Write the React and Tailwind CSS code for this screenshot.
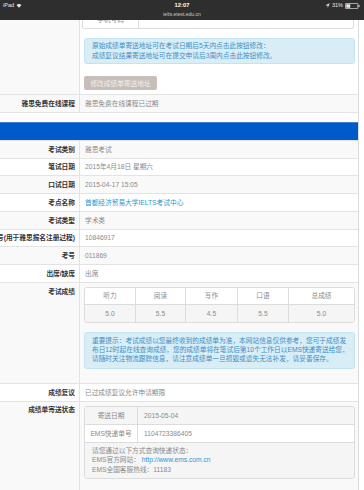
import React from 'react';

// IELTS score page as seen on iPad Safari (scaled)

const rows = [
  { label: '考试类别', value: '雅思考试' },
  { label: '笔试日期', value: '2015年4月18日 星期六' },
  { label: '口试日期', value: '2015-04-17 15:05' },
  { label: '考点名称', value: '首都经济贸易大学IELTS考试中心', link: true },
  { label: '考试类型', value: '学术类' },
  { label: '用户号(用于雅思报名注册过程)', value: '10846917' },
  { label: '考号', value: '011869' },
  { label: '出席/缺席', value: '出席' },
];

const scores = [
  { name: '听力', value: '5.0', w: 'w-[51px]' },
  { name: '阅读', value: '5.5', w: 'w-[50px]' },
  { name: '写作', value: '4.5', w: 'w-[52px]' },
  { name: '口语', value: '5.5', w: 'w-[51px]' },
  { name: '总成绩', value: '5.0', w: 'flex-1' },
];

const StatusBar = () => (
  <div className="h-[20px] bg-[#2e2e2e] text-white relative font-['Liberation_Sans',sans-serif]">
    <div className="absolute left-[3px] top-[2px] flex items-center gap-[2px] text-[5.5px] leading-[7px] text-[#e8e8e8]">
      <span>iPad</span>
      <svg width="6" height="5" viewBox="0 0 12 10">
        <path d="M6 9.5 L1 4 A7.5 7.5 0 0 1 11 4 Z" fill="#e8e8e8" />
      </svg>
    </div>
    <div className="absolute left-0 right-0 top-[2px] text-center text-[5.8px] leading-[7px] font-bold">12:07</div>
    <div className="absolute left-0 right-0 top-[11px] text-center text-[5px] leading-[7px] text-[#cfcfcf]">
      ielts.etest.edu.cn
    </div>
    <div className="absolute right-[4px] top-[2px] flex items-center gap-[2px] text-[5.5px] leading-[7px] text-[#e8e8e8]">
      <svg width="5" height="5" viewBox="0 0 10 10">
        <path d="M9.5 0.5 L0.5 4.5 L5 5 L5.5 9.5 Z" fill="#e8e8e8" />
      </svg>
      <span>31%</span>
      <svg width="15" height="6" viewBox="0 0 30 12">
        <rect x="0.75" y="0.75" width="25" height="10.5" rx="1.5" fill="none" stroke="#e8e8e8" strokeWidth="1.5" />
        <rect x="2.5" y="2.5" width="8" height="7" fill="#e8e8e8" />
        <rect x="27" y="4" width="2" height="4" fill="#e8e8e8" />
      </svg>
    </div>
  </div>
);

const Row = ({ label, striped, children, tall }) => (
  <div
    className={`flex border-t border-[#e3e3e3] ${striped ? 'bg-[#f9f9f9]' : 'bg-white'} ${tall ? 'items-start' : 'h-[17.75px]'}`}
  >
    <div className="w-[80px] shrink-0 self-stretch border-r border-[#e3e3e3] overflow-hidden">
      <div className="h-[16.75px] flex items-center justify-end pr-[4px]">
        <span className="shrink-0 whitespace-nowrap font-bold text-[#333]">{label}</span>
      </div>
    </div>
    <div className="flex-1 min-w-0">{children}</div>
  </div>
);

const Value = ({ children, link }) => (
  <div className={`h-[16.75px] flex items-center pl-[5px] whitespace-nowrap ${link ? 'text-[#2a97d0]' : 'text-[#8a8a8a]'}`}>
    {children}
  </div>
);

const App = () => {
  return (
    <div className="w-[364px] h-[490px] overflow-hidden bg-white text-[6.7px] leading-[9px] font-['Liberation_Sans','Noto_Sans_CJK_SC',sans-serif]">
      <StatusBar />

      <div className="w-[359px] border-r border-[#dcdcdc]">
        {/* Top row: end of address table, alert and button */}
        <div className="flex">
          <div className="w-[80px] shrink-0 bg-[#f9f9f9] border-r border-[#e3e3e3]" />
          <div className="flex-1 bg-white pl-[4px] pr-[3px] pb-[4px]">
            <div className="h-[9px] overflow-hidden flex flex-col justify-end -ml-[2px] mr-[1px]">
              <div className="h-[18px] shrink-0 flex border border-t-0 border-[#dcdcdc] rounded-b-[3px]">
                <div className="w-[56px] border-r border-[#dcdcdc] flex items-center justify-center text-[#8a8a8a]">
                  手机号码
                </div>
                <div className="flex-1" />
              </div>
            </div>
            <div className="mt-[9px] bg-[#d9edf7] border border-[#c4e3f0] rounded-[3px] pl-[7px] pt-[2px] pb-[2px] leading-[10px] text-[#3d8fc4] whitespace-nowrap">
              <div>原始成绩单寄送地址可在考试日期后5天内点击此按钮修改：</div>
              <div>成绩复议结果寄送地址可在提交申请后3周内点击此按钮修改。</div>
            </div>
            <div className="mt-[12px] w-[73px] h-[14px] rounded-[2px] bg-[#c7bdb9] text-[#f4efed] flex items-center justify-center whitespace-nowrap">
              修改成绩单寄送地址
            </div>
          </div>
        </div>

        <Row label="雅思免费在线课程" striped>
          <Value>雅思免费在线课程已过期</Value>
        </Row>
        <div className="border-t border-[#e3e3e3] h-[10px] bg-white" />

        {/* Blue header */}
        <div className="h-[18px] bg-[#005ac8] border-t border-[#3d80d6]" />

        {rows.map((r, i) => (
          <Row key={r.label} label={r.label} striped={i % 2 === 0}>
            <Value link={r.link}>{r.value}</Value>
          </Row>
        ))}

        <Row label="考试成绩" striped tall>
          <div className="pl-[4px] pr-[3px] pt-[4px] pb-[14px]">
            <div className="border border-[#dcdcdc] rounded-[3px] overflow-hidden text-[#8a8a8a]">
              <div className="flex h-[16px] bg-white">
                {scores.map((s, i) => (
                  <div
                    key={s.name}
                    className={`${s.w} flex items-center justify-center ${i < 4 ? 'border-r border-[#dcdcdc]' : ''}`}
                  >
                    {s.name}
                  </div>
                ))}
              </div>
              <div className="flex h-[18px] bg-[#f5f5f5] border-t border-[#dcdcdc]">
                {scores.map((s, i) => (
                  <div
                    key={s.name}
                    className={`${s.w} flex items-center justify-center ${i < 4 ? 'border-r border-[#dcdcdc]' : ''}`}
                  >
                    {s.value}
                  </div>
                ))}
              </div>
            </div>
            <div className="mt-[9px] bg-[#d9edf7] border border-[#c4e3f0] rounded-[3px] pl-[7px] pt-[3px] pb-[5px] leading-[9px] text-[#3d8fc4] whitespace-nowrap">
              <div>重要提示：考试成绩以您最终收到的成绩单为准，本网站信息仅供参考，您可于成绩发</div>
              <div>布日12时起在线查询成绩，您的成绩单将在笔试后第10个工作日以EMS快递寄送给您，</div>
              <div>请随时关注物流跟踪信息，请注意成绩单一旦损毁或遗失无法补发，请妥善保存。</div>
            </div>
          </div>
        </Row>

        <Row label="成绩复议">
          <Value>已过成绩复议允许申请期限</Value>
        </Row>

        <Row label="成绩单寄送状态" striped tall>
          <div className="pl-[4px] pr-[3px] pt-[4px] pb-[13px]">
            <div className="border border-[#dcdcdc] rounded-[3px] overflow-hidden text-[#8a8a8a]">
              <div className="flex h-[17px] bg-[#f5f5f5]">
                <div className="w-[53px] border-r border-[#dcdcdc] flex items-center justify-center">寄送日期</div>
                <div className="flex-1 flex items-center pl-[6px]">2015-05-04</div>
              </div>
              <div className="flex h-[18px] bg-white border-t border-[#dcdcdc]">
                <div className="w-[53px] border-r border-[#dcdcdc] flex items-center justify-center whitespace-nowrap">EMS快递单号</div>
                <div className="flex-1 flex items-center pl-[6px]">1104723386405</div>
              </div>
              <div className="bg-[#f5f5f5] border-t border-[#dcdcdc] pl-[7px] pt-[3px] pb-[3.5px] leading-[9.5px] whitespace-nowrap">
                <div>请您通过以下方式查询快递状态：</div>
                <div>
                  EMS官方网站： <span className="text-[#2a97d0]">http://www.ems.com.cn</span>
                </div>
                <div>EMS全国客服热线：11183</div>
              </div>
            </div>
          </div>
        </Row>
        <div className="border-t border-[#e3e3e3]" />
      </div>
    </div>
  );
};

export default App;
